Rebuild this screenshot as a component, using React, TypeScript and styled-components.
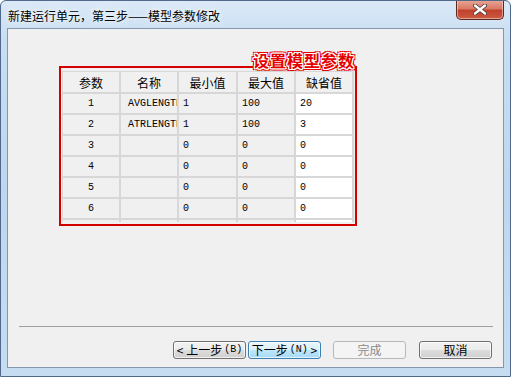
import React from "react";
import styled, { createGlobalStyle } from "styled-components";

const GlobalStyle = createGlobalStyle`
  html, body { margin: 0; padding: 0; background: #ffffff; }
  body { font-family: "Noto Sans CJK SC", "Liberation Sans", sans-serif; font-size: 12px; }
  * { box-sizing: border-box; }
`;

const Window = styled.div`
  width: 511px;
  height: 377px;
  border: 1px solid #50698a;
  border-radius: 6px 6px 0 0;
  background: linear-gradient(180deg, #dbe9f7 0%, #c9def2 10%, #bfd6ee 50%, #c6dcf1 100%);
  display: flex;
  flex-direction: column;
  padding: 0 6px 8px 6px;
  overflow: hidden;
`;

const TitleBar = styled.div`
  height: 27px;
  display: flex;
  align-items: flex-start;
  justify-content: space-between;
`;

const TitleText = styled.div`
  margin-top: 7px;
  padding-left: 1px;
  font-family: "Noto Sans CJK SC", sans-serif;
  font-size: 12px;
  line-height: 16px;
  color: #000;
  text-shadow: 0 0 6px #ffffff, 0 0 3px #eef6ff;
`;

const CloseButton = styled.div`
  margin-top: -1px;
  width: 48px;
  height: 20px;
  border: 1px solid #5a2a22;
  border-top: none;
  border-radius: 0 0 5px 5px;
  background: linear-gradient(180deg, #e9a898 0%, #d97a66 45%, #c2412b 55%, #c95c44 100%);
  box-shadow: inset 0 0 0 1px rgba(255, 210, 200, 0.6);
  display: flex;
  align-items: center;
  justify-content: center;
`;

const Client = styled.div`
  flex: 1;
  background: #f0f0f0;
  border: 1px solid #8497ad;
  display: flex;
  flex-direction: column;
`;

const Main = styled.div`
  flex: 1;
  padding: 37px 0 0 51px;
`;

const RedBox = styled.div`
  position: relative;
  width: 298px;
  height: 160px;
  border: 2px solid #d40000;
  padding: 3px 0 0 1px;
`;

const RedLabel = styled.div`
  position: absolute;
  right: 0px;
  top: -16px;
  font-family: "Noto Sans CJK SC", sans-serif;
  font-weight: 700;
  font-size: 16px;
  line-height: 17px;
  letter-spacing: 1px;
  color: #e60000;
  text-shadow:
    1px 0 0 #fff, -1px 0 0 #fff, 0 1px 0 #fff, 0 -1px 0 #fff,
    1px 1px 0 #fff, -1px -1px 0 #fff, 1px -1px 0 #fff, -1px 1px 0 #fff,
    2px 0 0 #e60000, -2px 0 0 #e60000, 0 2px 0 #e60000, 0 -2px 0 #e60000,
    2px 2px 0 #e60000, -2px -2px 0 #e60000, 2px -2px 0 #e60000, -2px 2px 0 #e60000;
`;

const Grid = styled.div`
  width: 292px;
  height: 151px;
  overflow: hidden;
  border-left: 1px solid #d7d7d7;
  border-top: 1px solid #d7d7d7;
  display: grid;
  grid-template-columns: 58px 58px 59px 58px 58px;
  grid-template-rows: 22px;
  grid-auto-rows: 21px;
`;

const Cell = styled.div<{ $pad?: number; $white?: boolean; $mono?: boolean }>`
  background: ${(p) => (p.$white ? "#ffffff" : "#f0f0f0")};
  border-right: 2px solid #d7d7d7;
  border-bottom: 2px solid #d7d7d7;
  display: flex;
  align-items: center;
  justify-content: ${(p) => (p.$pad !== undefined ? "flex-start" : "center")};
  padding-left: ${(p) => p.$pad ?? 0}px;
  font-family: ${(p) =>
    p.$mono ? '"Liberation Mono", "DejaVu Sans Mono", monospace' : '"Noto Sans CJK SC", sans-serif'};
  font-size: ${(p) => (p.$mono ? "10px" : "12px")};
  color: #000;
  white-space: nowrap;
  overflow: hidden;
`;

const Separator = styled.div`
  height: 1px;
  margin: 0 10px 0 11px;
  background: #a0a0a0;
`;

const ButtonRow = styled.div`
  display: flex;
  justify-content: flex-end;
  padding: 14px 11px 8px 0;
`;

const Button = styled.div<{ $variant?: "default" | "focus" | "disabled"; $gap?: number }>`
  width: 73px;
  height: 18px;
  margin-left: ${(p) => p.$gap ?? 0}px;
  border-radius: 3px;
  border: 1px solid
    ${(p) => (p.$variant === "focus" ? "#3c7fb1" : p.$variant === "disabled" ? "#b5b9bc" : "#707070")};
  background: ${(p) =>
    p.$variant === "focus"
      ? "linear-gradient(180deg, #eaf6fd 0%, #d9f0fc 50%, #bee6fd 51%, #a7d9f5 100%)"
      : p.$variant === "disabled"
      ? "#f4f4f4"
      : "linear-gradient(180deg, #f2f2f2 0%, #ebebeb 50%, #dddddd 51%, #cfcfcf 100%)"};
  box-shadow: inset 0 0 0 1px
    ${(p) => (p.$variant === "disabled" ? "#f4f4f4" : "rgba(255,255,255,0.7)")};
  color: ${(p) => (p.$variant === "disabled" ? "#8a8a8a" : "#000")};
  font-family: "Noto Sans CJK SC", sans-serif;
  font-size: 12px;
  line-height: 16px;
  display: flex;
  align-items: center;
  justify-content: center;
  white-space: nowrap;
`;

const Key = styled.span`
  font-family: "Liberation Mono", monospace;
  font-size: 10px;
  margin-left: 2px;
`;

const headers = ["参数", "名称", "最小值", "最大值", "缺省值"];
const rows: [string, string, string, string, string][] = [
  ["1", "AVGLENGTH", "1", "100", "20"],
  ["2", "ATRLENGTH", "1", "100", "3"],
  ["3", "", "0", "0", "0"],
  ["4", "", "0", "0", "0"],
  ["5", "", "0", "0", "0"],
  ["6", "", "0", "0", "0"],
  ["", "", "", "", ""],
];

export default function App() {
  return (
    <>
      <GlobalStyle />
      <Window>
        <TitleBar>
          <TitleText>新建运行单元，第三步——模型参数修改</TitleText>
          <CloseButton>
            <svg width="14" height="11" viewBox="0 0 14 11">
              <path d="M2 1.5 L12 9.5 M12 1.5 L2 9.5" stroke="#4a3a3a" strokeWidth="4" strokeLinecap="round" />
              <path d="M2 1.5 L12 9.5 M12 1.5 L2 9.5" stroke="#ffffff" strokeWidth="2.4" strokeLinecap="round" />
            </svg>
          </CloseButton>
        </TitleBar>
        <Client>
          <Main>
            <RedBox>
              <RedLabel>设置模型参数</RedLabel>
              <Grid>
                {headers.map((h) => (
                  <Cell key={h}>{h}</Cell>
                ))}
                {rows.map((r, i) => (
                  <React.Fragment key={i}>
                    <Cell $mono>{r[0]}</Cell>
                    <Cell $mono $pad={7}>{r[1]}</Cell>
                    <Cell $mono $pad={4}>{r[2]}</Cell>
                    <Cell $mono $pad={4}>{r[3]}</Cell>
                    <Cell $mono $pad={4} $white>{r[4]}</Cell>
                  </React.Fragment>
                ))}
              </Grid>
            </RedBox>
          </Main>
          <Separator />
          <ButtonRow>
            <Button>
              &lt; 上一步<Key>(B)</Key>
            </Button>
            <Button $variant="focus" $gap={2}>
              下一步<Key>(N)</Key>&nbsp;&gt;
            </Button>
            <Button $variant="disabled" $gap={12}>
              完成
            </Button>
            <Button $gap={13}>取消</Button>
          </ButtonRow>
        </Client>
      </Window>
    </>
  );
}
